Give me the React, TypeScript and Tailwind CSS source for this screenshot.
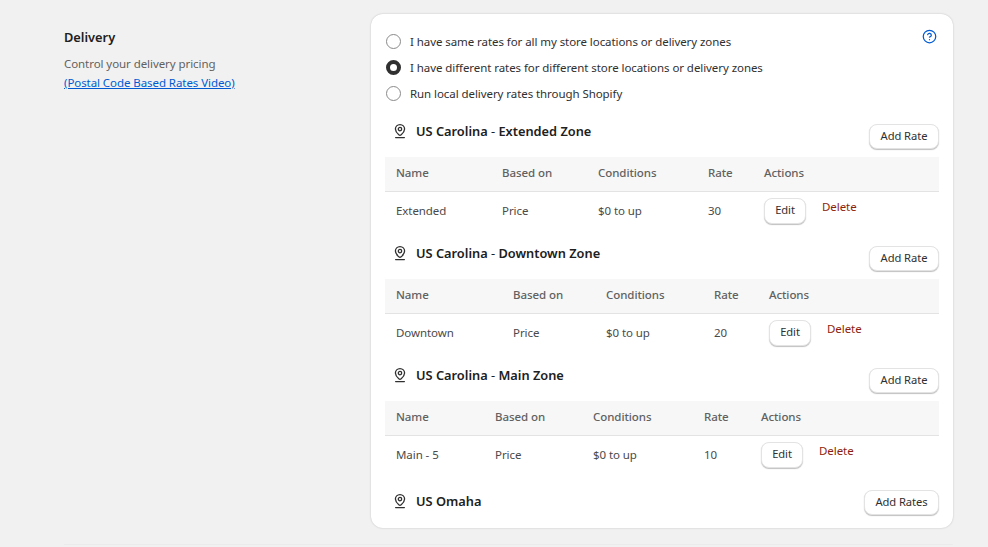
import React from 'react';
import { CircleHelp } from 'lucide-react';

const zones = [
  {
    title: 'US Carolina',
    suffix: 'Extended Zone',
    cols: [117, 96, 110, 56, 175],
    row: { name: 'Extended', basis: 'Price', cond: '$0 to up', rate: '30' },
  },
  {
    title: 'US Carolina',
    suffix: 'Downtown Zone',
    cols: [128, 93, 108, 55, 170],
    row: { name: 'Downtown', basis: 'Price', cond: '$0 to up', rate: '20' },
  },
  {
    title: 'US Carolina',
    suffix: 'Main Zone',
    cols: [110, 98, 111, 57, 178],
    row: { name: 'Main - 5', basis: 'Price', cond: '$0 to up', rate: '10' },
  },
];

const PinIcon = () => (
  <svg width="16" height="16" viewBox="0 0 16 16" fill="none" stroke="#303030" strokeWidth="1.3" className="shrink-0">
    <path d="M8 1.6c-2.7 0-4.6 2-4.6 4.5 0 2.3 1.7 4.2 3.4 5.7.7.6 1.7.6 2.4 0 1.7-1.5 3.4-3.4 3.4-5.7 0-2.5-1.9-4.5-4.6-4.5Z" />
    <circle cx="8" cy="6.1" r="1.7" />
    <path d="M3.6 14.6h8.8" strokeLinecap="round" />
  </svg>
);

const Radio = ({ label, checked }: { label: string; checked?: boolean }) => (
  <label className="flex h-[26px] items-center gap-[9px] pl-[1px] text-[#303030]">
    {checked ? (
      <span className="mb-[1px] h-[15px] w-[15px] rounded-full border-[4.5px] border-[#303030] bg-white" />
    ) : (
      <span className="mb-[1px] h-[15px] w-[15px] rounded-full border border-[#8a8a8a] bg-white" />
    )}
    <span>{label}</span>
  </label>
);

const Button = ({ children, className }: { children: React.ReactNode; className: string }) => (
  <button className={`flex h-[25px] items-center justify-center rounded-lg border border-[#e3e3e3] bg-white text-[11.2px] text-[#303030] shadow-[0_1px_1px_rgba(0,0,0,0.25)] ${className}`}>
    {children}
  </button>
);

const ZoneHeader = ({ title, suffix, low }: { title: string; suffix?: string; low?: boolean }) => (
  <div className="flex h-[31px] items-start justify-between">
    <div className={`flex items-center gap-[8px] pl-[7px] text-[12.8px] leading-[18px] tracking-normal ${low ? 'pt-[8px]' : 'pt-[4px]'}`}>
      <PinIcon />
      <span className="font-semibold text-[#202020]">
        {title}
        {suffix && <span className="font-normal"> - </span>}
        {suffix}
      </span>
    </div>
    <Button className={`mt-[6px] ${low ? 'w-[75px]' : 'w-[70px]'}`}>{low ? 'Add Rates' : 'Add Rate'}</Button>
  </div>
);

export default function App() {
  return (
    <div className="min-h-[547px] bg-[#f1f1f1] pt-[14px] pl-[64px] pr-[35px] font-['Noto_Sans',sans-serif] text-[11.5px] tracking-[-0.07px] text-[#303030]">
      <div className="flex items-start border-b border-[#ebebeb] pb-[16px]">
        {/* left description column */}
        <div className="w-[307px] shrink-0 pt-[13px]">
          <h2 className="text-[12.8px] leading-[20px] font-semibold tracking-normal text-[#202020]">Delivery</h2>
          <p className="mt-[7px] leading-[19px] text-[#616161]">Control your delivery pricing</p>
          <a href="#" className="block leading-[19px] text-[#005bd3] underline">(Postal Code Based Rates Video)</a>
        </div>

        {/* rates card */}
        <div className="w-[582px] rounded-xl bg-white px-[14px] pt-[15px] pb-[13px] shadow-[0_0_2px_rgba(0,0,0,0.22)]">
          <div className="flex items-start justify-between">
            <div>
              <Radio label="I have same rates for all my store locations or delivery zones" />
              <Radio checked label="I have different rates for different store locations or delivery zones" />
              <Radio label="Run local delivery rates through Shopify" />
            </div>
            <CircleHelp size={15} strokeWidth={2} className="mr-[2px] text-[#005bd3]" />
          </div>

          <div className="mt-[11px]">
            {zones.map((zone) => (
              <div key={zone.suffix} className="pb-[8px]">
                <ZoneHeader title={zone.title} suffix={zone.suffix} />
                <table className="mt-[8px] w-full table-fixed border-collapse">
                  <colgroup>
                    {zone.cols.map((w, i) => (
                      <col key={i} style={{ width: w }} />
                    ))}
                  </colgroup>
                  <thead>
                    <tr className="h-[34px] border-b border-[#e3e3e3] bg-[#f7f7f7] text-left text-[#616161]">
                      {['Name', 'Based on', 'Conditions', 'Rate', 'Actions'].map((h, i) => (
                        <th key={h} className={`pb-[2px] font-medium ${i === 0 ? 'pl-[11px]' : ''}`}>
                          {h}
                        </th>
                      ))}
                    </tr>
                  </thead>
                  <tbody>
                    <tr className="h-[41px]">
                      <td className="pb-[2px] pl-[11px] text-[#4a4a4a]">{zone.row.name}</td>
                      <td className="pb-[2px] text-[#4a4a4a]">{zone.row.basis}</td>
                      <td className="pb-[2px] text-[#4a4a4a]">{zone.row.cond}</td>
                      <td className="pb-[2px] text-[#4a4a4a]">{zone.row.rate}</td>
                      <td className="pt-[6px] align-top">
                        <div className="flex items-start gap-[16px]">
                          <Button className="h-[26px] w-[42px]">Edit</Button>
                          <a className="leading-[18px] text-[#8e1f0b]">Delete</a>
                        </div>
                      </td>
                    </tr>
                  </tbody>
                </table>
              </div>
            ))}
            <ZoneHeader title="US Omaha" low />
          </div>
        </div>
      </div>
    </div>
  );
}
